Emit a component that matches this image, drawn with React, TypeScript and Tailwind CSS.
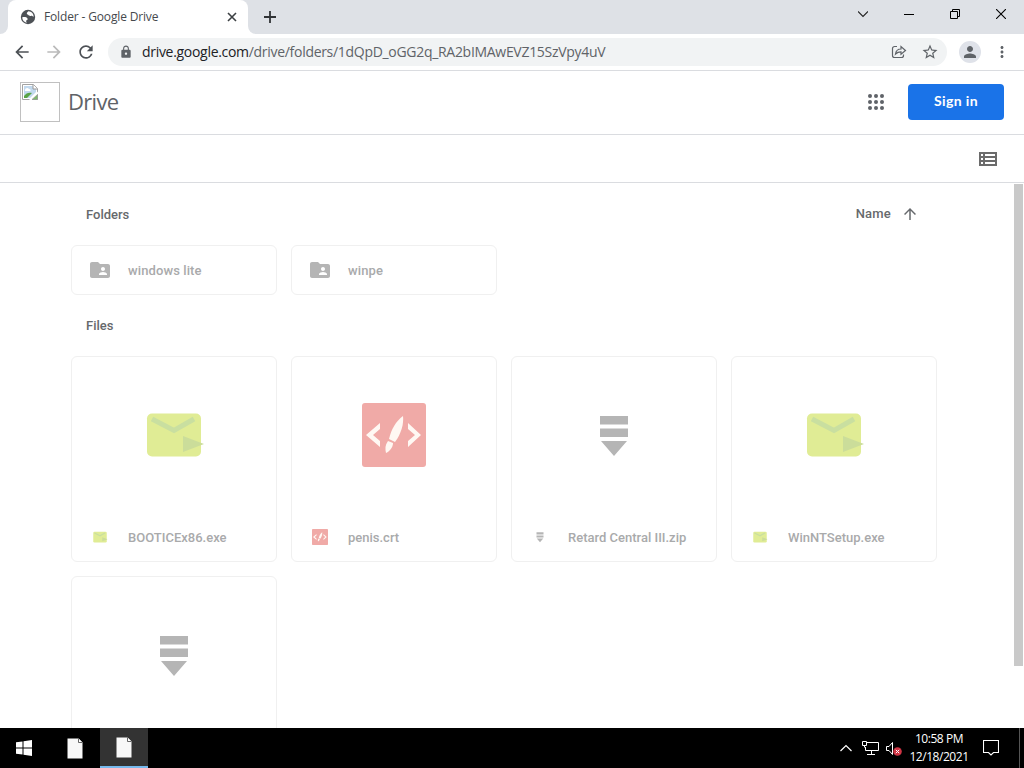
import React from "react";
import {
  MdArrowBack,
  MdArrowForward,
  MdArrowUpward,
  MdFolderShared,
  MdLock,
  MdMoreVert,
  MdPerson,
  MdRefresh,
  MdStarBorder,
} from "react-icons/md";

type FileKind = "exe" | "crt" | "zip";

const folders = ["windows lite", "winpe"];

const files: Array<{ name: string; kind: FileKind }> = [
  { name: "BOOTICEx86.exe", kind: "exe" },
  { name: "penis.crt", kind: "crt" },
  { name: "Retard Central III.zip", kind: "zip" },
  { name: "WinNTSetup.exe", kind: "exe" },
  { name: "", kind: "zip" },
];

const FileIcon = ({ kind, className }: { kind: FileKind; className: string }) => {
  if (kind === "exe") {
    return (
      <svg viewBox="0 0 64 64" className={className}>
        <rect x="5" y="10.5" width="54" height="43" rx="5" fill="#e0ec95" />
        <path d="M10 16l22 11.500L52 16" fill="none" stroke="#c9dfa0" strokeWidth="5" />
        <path d="M41 33l21 8-21 8z" fill="#cbdd9a" />
      </svg>
    );
  }
  if (kind === "crt") {
    return (
      <svg viewBox="0 0 64 64" className={className}>
        <rect width="64" height="64" rx="3" fill="#f0aaa7" />
        <g fill="#fff8f3">
          <path d="M18 20v6l-7 6 7 6v6L4 32z" />
          <path d="M46 20v6l7 6-7 6v6l13-12z" />
          <path d="M41 13c1 8-2 18-8 26l-6-3c2-9 7-18 14-23z" />
          <path d="M26 38l5 2c0 4-3 8-7 10-1-4-1-8 2-12z" />
        </g>
      </svg>
    );
  }
  return (
    <svg viewBox="0 0 64 64" className={className} fill="#b5b5b5">
      <path d="M18 13h28v8.500H18zM18 25.500h28V34H18zM19 38h26L32 53z" />
    </svg>
  );
};

const GlobeIcon = () => (
  <svg viewBox="0 0 16 16" className="h-4 w-4 shrink-0">
    <circle cx="8" cy="8" r="7.200" fill="#4d5156" />
    <path d="M2.300 8.200c2.200-.4 4.400 0 5.200 1.300.5 1-.2 1.600-1.200 1.900-.4.700 0 1.500.6 2.300C4.200 13.300 2.200 11 2.300 8.200z" fill="#fff" />
    <path d="M8.300 2.300c-.3 1-1.600 1-1.500 2.100.1.900 1.300.9 1.700 1.700.4.900 1.500 1 2.500.8.900-.2 1.500.5 2.600.9.200-2.900-2-5.300-5.300-5.500z" fill="#fff" />
  </svg>
);

const ShareIcon = () => (
  <svg viewBox="0 0 16 16" className="w-4 h-4" fill="none" stroke="#5f6368" strokeWidth="1.200">
    <path d="M6 2.500H3.500a2 2 0 0 0-2 2v7a2 2 0 0 0 2 2h7a2 2 0 0 0 2-2v-1" />
    <path d="M4.500 10C5 6.500 7 5 10 5V2.500L14.500 6.500 10 10.200V7.800C7.500 7.800 6 8.500 4.500 10z" />
  </svg>
);

const AppsIcon = () => (
  <svg viewBox="0 0 16 16" className="w-4 h-4" fill="#5f6368">
    {[2, 8, 14].map((y) =>
      [2, 8, 14].map((x) => <circle key={`${x}-${y}`} cx={x} cy={y} r="2" />)
    )}
  </svg>
);

const ListIcon = () => (
  <svg viewBox="0 0 18 14" className="w-[18px] h-3.5" fill="#6b6b6b">
    <path
      fillRule="evenodd"
      d="M0 0h18v14H0zM2 2v2h2V2zM6 2v2h10V2zM2 6v2h2V6zM6 6v2h10V6zM2 10v2h2v-2zM6 10v2h10v-2z"
    />
  </svg>
);

const BrokenImage = () => (
  <svg viewBox="0 0 16 16" className="w-4 h-4">
    <path d="M.5.5h11l4 4v11H.500z" fill="#fff" stroke="#a3a3a3" />
    <path d="M2 2h9v3h3v3l-6 6H2z" fill="#c2d9ee" />
    <path d="M3 6c0-2 3-3 4-1 2 0 2 2 1 2H3z" fill="#fff" />
    <path d="M2 14v-2c2-3 5-4 8-3l-5 5z" fill="#59a345" />
    <path d="M11 .5v4.500h4.500" fill="#fff" stroke="#999" />
    <path d="M16 7.500L7 16h3l6-6z" fill="#fff" />
    <path d="M10 15.500l5.500-5v5z" fill="#7dba6b" stroke="#999" strokeWidth=".7" />
  </svg>
);

const PageIcon = () => (
  <svg viewBox="0 0 16 21" className="w-4 h-[21px]">
    <path d="M.5.500h11l4 4v16H.500z" fill="#f8f8f8" />
    <path d="M11.500.500v4h4" fill="#fff" stroke="#555" strokeWidth=".9" />
  </svg>
);

const TabStrip = () => (
  <div className="flex h-[34px] bg-[#dee1e6]">
    <div className="w-2 bg-white">
      <div className="h-full rounded-br-lg bg-[#dee1e6]" />
    </div>
    <div className="flex h-full w-60 items-center rounded-t-lg bg-white pl-3 pr-[11px]">
      <GlobeIcon />
      <span className="ml-2 flex-1 whitespace-nowrap font-['Open_Sans',sans-serif] text-[12px] tracking-[-0.15px] text-[#45494d]">
        Folder - Google Drive
      </span>
      <svg viewBox="0 0 10 10" className="h-2.5 w-2.5" stroke="#3c4043" strokeWidth="1.600">
        <path d="M1 1l8 8M9 1L1 9" />
      </svg>
    </div>
    <div className="w-2 bg-white">
      <div className="h-full rounded-bl-lg bg-[#dee1e6]" />
    </div>
    <div className="flex flex-1 items-center pl-2">
      <svg viewBox="0 0 12 12" className="h-3 w-3" stroke="#303336" strokeWidth="1.800">
        <path d="M6 0v12M0 6h12" />
      </svg>
    </div>
    <div className="flex h-7 items-center gap-9 pr-[18px]">
      <svg viewBox="0 0 10 10" className="h-2.5 w-2.5" fill="none" stroke="#222" strokeWidth="1.100">
        <path d="M0 2.500l5 5 5-5" />
      </svg>
      <svg viewBox="0 0 10 10" className="h-2.5 w-2.5" stroke="#000">
        <path d="M0 5.500h10" />
      </svg>
      <svg viewBox="0 0 10 10" className="h-2.5 w-2.5" fill="none" stroke="#000">
        <path d="M.5 2.500h7v7h-7zM2.500 2.500v-2h7v7h-2" />
      </svg>
      <svg viewBox="0 0 10 10" className="h-2.5 w-2.5" stroke="#000" strokeWidth="1.100">
        <path d="M0 0l10 10M10 0L0 10" />
      </svg>
    </div>
  </div>
);

const AddressBar = () => (
  <div className="flex h-[37px] items-center border-b border-[#dadce0] bg-white pl-3 pr-[13px] text-[#5f6368]">
    <MdArrowBack className="h-5 w-5 text-[#4d5156]" />
    <MdArrowForward className="ml-3 h-5 w-5 text-[#bababa]" />
    <MdRefresh className="ml-3 h-5 w-5 text-[#4d5156]" />
    <div className="ml-3 flex h-7 flex-1 items-center rounded-full bg-[#f1f3f4] pl-[11px] pr-2">
      <MdLock className="h-3.5 w-3.5" />
      <span className="ml-[9px] flex-1 whitespace-nowrap pb-px font-['Open_Sans',sans-serif] text-[14px]">
        <span className="tracking-[-0.3px] text-[#202124]">drive.google.com</span>
        <span className="tracking-[-0.3px]">/drive/folders/1dQpD_oGG2q_RA2bIMAwEVZ15SzVpy4uV</span>
      </span>
      <ShareIcon />
      <MdStarBorder className="ml-3.5 h-[18px] w-[18px]" />
    </div>
    <div className="ml-3 flex h-[22px] w-[22px] items-center justify-center rounded-full bg-[#dfe2e9]">
      <MdPerson className="h-[18px] w-[18px]" />
    </div>
    <MdMoreVert className="ml-3 h-[18px] w-[18px]" />
  </div>
);

const DriveHeader = () => (
  <header className="flex h-16 items-center border-b border-[#dadce0] px-5 pb-[2px]">
    <div className="h-10 w-10 border border-[#c0c0c0] p-[1px]">
      <BrokenImage />
    </div>
    <span className="ml-2 flex-1 font-['Open_Sans',sans-serif] text-[22px] tracking-[-0.7px] text-[#5f6368]">
      Drive
    </span>
    <AppsIcon />
    <button className="ml-6 h-9 w-24 rounded bg-[#1a73e8] pb-0.5 font-['Lato',sans-serif] text-[14px] font-bold tracking-[0.4px] text-white">
      Sign in
    </button>
  </header>
);

const Listing = () => (
  <main className="flex h-[545px] justify-between overflow-hidden bg-white">
    <div className="ml-[71px] w-[866px] text-[13px] font-medium">
      <div className="flex h-[62px] items-center justify-between pl-[15px] pr-[18px] text-[#66696c]">
        <h2 className="pt-0.5">Folders</h2>
        <div className="flex items-center gap-[10px]">
          <span className="tracking-[0.2px]">Name</span>
          <MdArrowUpward className="h-[18px] w-[18px]" />
        </div>
      </div>
      <div className="grid grid-cols-4 gap-3.5">
        {folders.map((name) => (
          <div
            key={name}
            className="flex h-[50px] items-center rounded-md border border-[#f0f0f0] bg-white pl-4 text-[#a9aaab]"
          >
            <MdFolderShared className="h-6 w-6 text-[#b5b5b5]" />
            <span className="ml-4 pt-0.5 tracking-[0.1px]">{name}</span>
          </div>
        ))}
      </div>
      <h2 className="flex h-[61px] items-center pl-[15px] text-[#66696c]">Files</h2>
      <div className="grid grid-cols-4 gap-3.5">
        {files.map((file, index) => (
          <div key={index} className="h-[206px] rounded-md border border-[#f0f0f0] bg-white text-[#a9aaab]">
            <div className="flex h-[156px] items-center justify-center">
              <FileIcon kind={file.kind} className="h-16 w-16" />
            </div>
            <div className="flex h-12 items-center pl-5">
              <FileIcon kind={file.kind} className="h-4 w-4" />
              <span className="ml-5 whitespace-nowrap pt-0.5">{file.name}</span>
            </div>
          </div>
        ))}
      </div>
    </div>
    <div className="w-2.5 pt-px">
      <div className="h-[482px] w-[9px] bg-[#c9c9c9]" />
    </div>
  </main>
);

const Taskbar = () => (
  <footer className="flex h-10 items-center bg-black text-white">
    <svg viewBox="0 0 16 16" className="ml-4 h-4 w-4" fill="#fff">
      <path d="M0 2.300L6.500 1.400v6.100H0zM7.500 1.200L16 0v7.500H7.500zM0 8.500h6.500v6.100L0 13.700zM7.500 8.500H16V16l-8.500-1.200z" />
    </svg>
    <div className="ml-[18px] flex h-10 w-[50px] items-center justify-center pr-px">
      <PageIcon />
    </div>
    <div className="flex h-10 w-12 items-center justify-center border-b-2 border-[#76b9ed] bg-[#333] pr-px pt-px">
      <PageIcon />
    </div>
    <div className="flex-1" />
    <svg viewBox="0 0 12 8" className="h-2 w-3" fill="none" stroke="#fff" strokeWidth="1.200">
      <path d="M.5 7L6 1.500 11.500 7" />
    </svg>
    <svg viewBox="0 0 17 14" className="ml-2.5 h-3.5 w-[17px]" fill="none" stroke="#fff">
      <path d="M5 1.500h11.500v8H3.500V6M9.500 9.500v4M5 13.500h8M.5.500h4v4h-4zM2.500 4.500v2" />
    </svg>
    <svg viewBox="0 0 16 15" className="ml-[7px] h-[15px] w-4" fill="none" stroke="#fff">
      <path d="M.5 5.500H3L6.500 1.500v12L3 9.500H.500z" />
      <circle cx="11.500" cy="10.500" r="4.300" fill="#d13444" stroke="none" />
      <path d="M9.800 8.800l3.400 3.400M13.200 8.800l-3.400 3.400" strokeWidth="1" />
    </svg>
    <div className="ml-[7px] w-[60px] whitespace-nowrap text-center font-['Open_Sans',sans-serif] text-[12px] leading-[18px] tracking-[-0.45px]">
      <div>10:58 PM</div>
      <div>12/18/2021</div>
    </div>
    <svg viewBox="0 0 16 16" className="ml-3.5 h-4 w-4" fill="none" stroke="#fff" strokeWidth="1.100">
      <path d="M.5.500h15v12h-5L8 15l-2.500-2.500h-5z" />
    </svg>
    <div className="ml-5 mr-1 h-10 w-px bg-[#555]" />
  </footer>
);

export default function App() {
  return (
    <div className="h-[768px] w-[1024px] overflow-hidden bg-white font-['Roboto',sans-serif]">
      <TabStrip />
      <AddressBar />
      <DriveHeader />
      <div className="flex h-12 items-center justify-end border-b border-[#dadce0] pr-[27px]">
        <ListIcon />
      </div>
      <Listing />
      <Taskbar />
    </div>
  );
}
